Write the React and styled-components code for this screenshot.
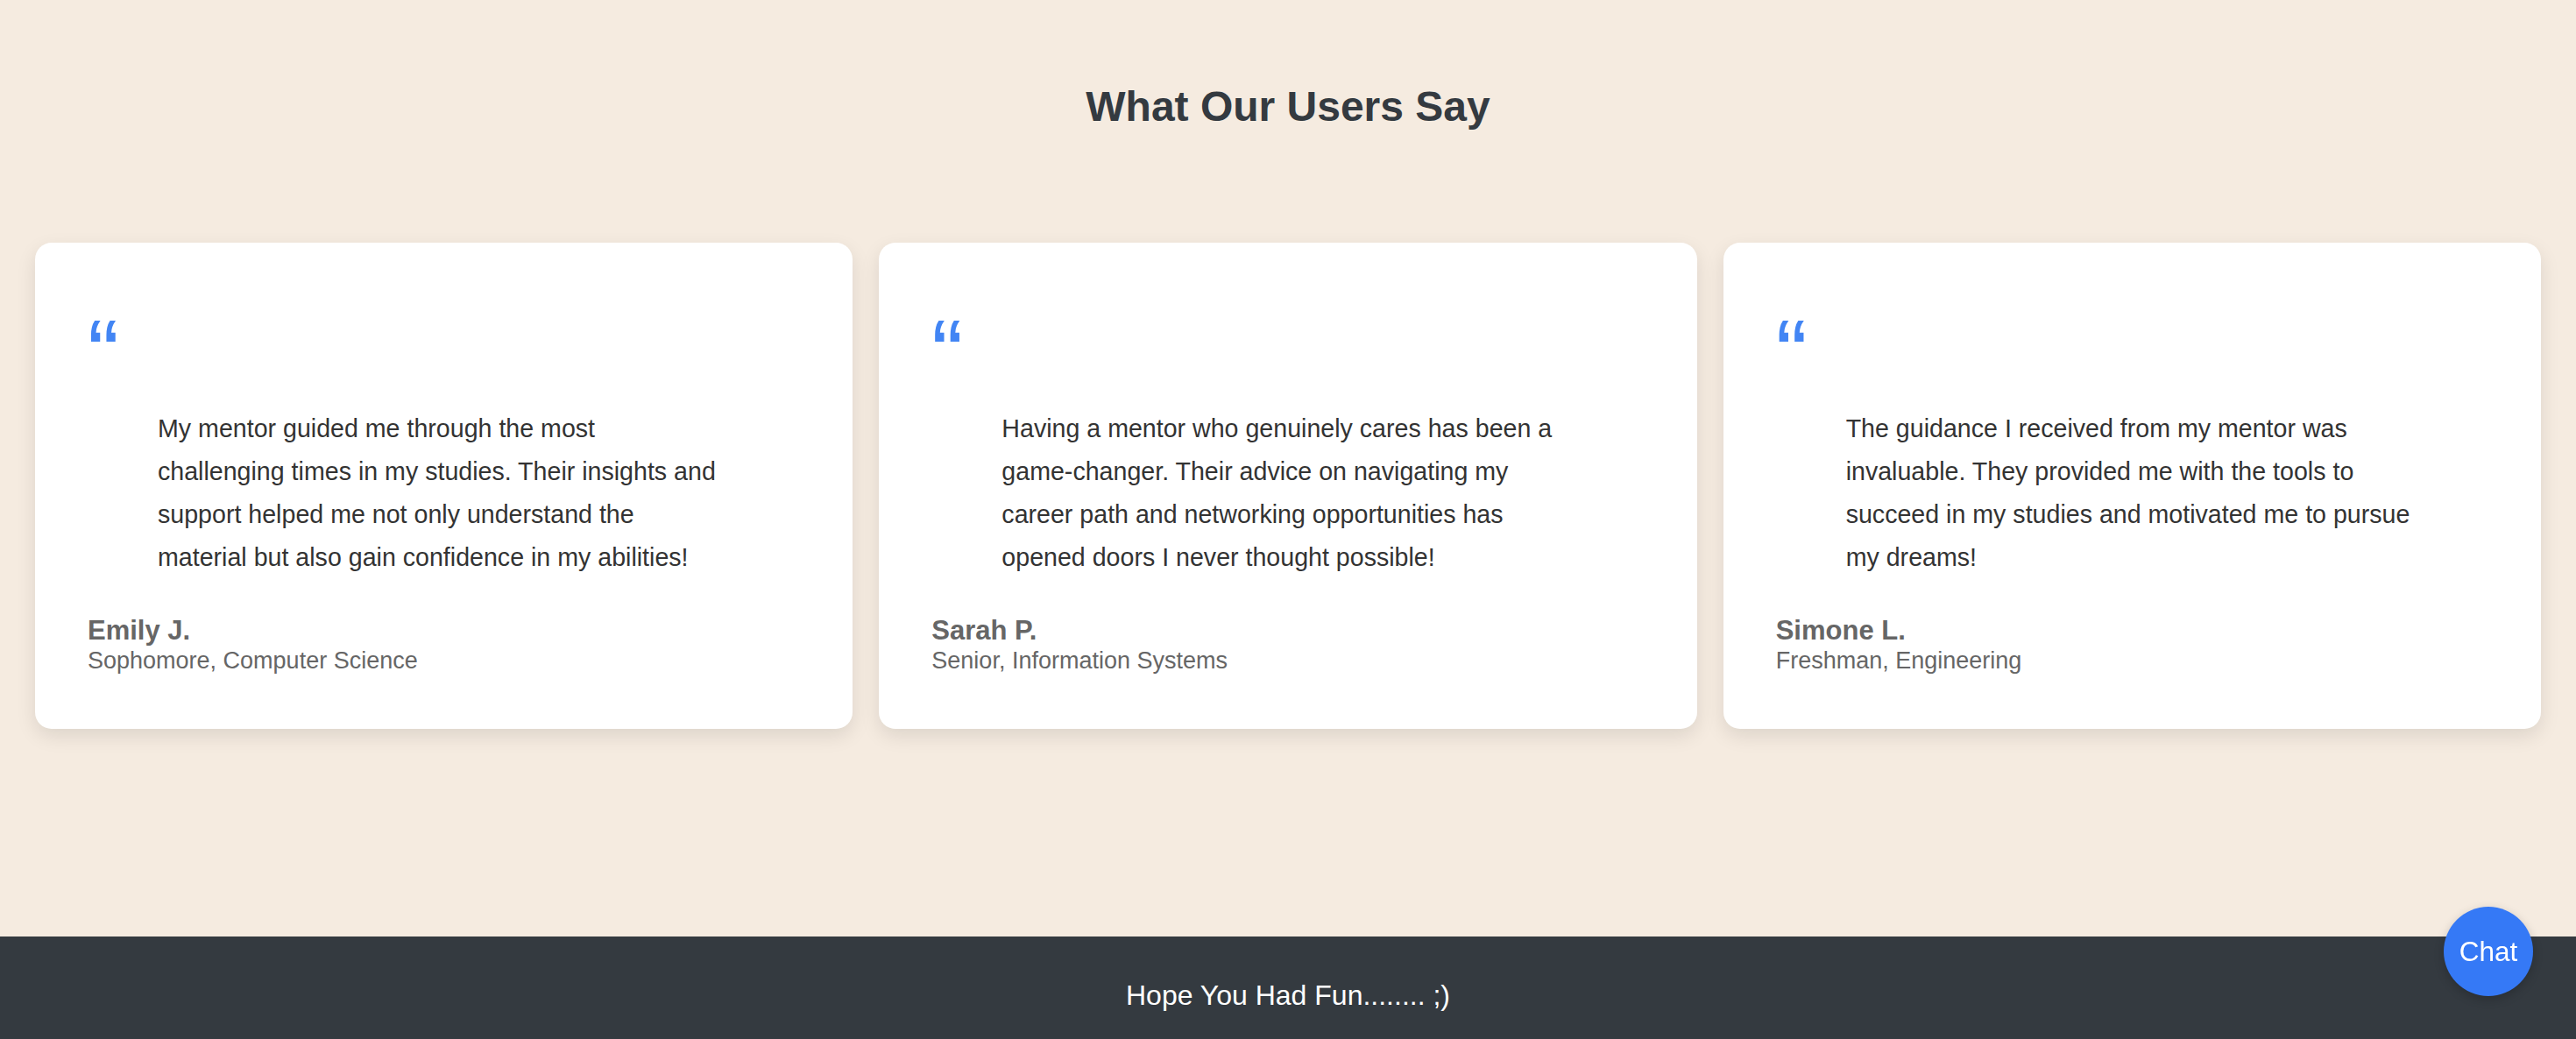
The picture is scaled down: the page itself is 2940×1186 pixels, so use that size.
import React from 'react';
import styled, { createGlobalStyle } from 'styled-components';

const GlobalStyle = createGlobalStyle`
	html,
	body {
		margin: 0;
		padding: 0;
		background: #f5ebe0;
		font-family: 'Liberation Sans', Arial, Helvetica, sans-serif;
	}
`;

const Page = styled.div`
	min-height: 100vh;
	display: flex;
	flex-direction: column;
`;

const Section = styled.main`
	flex: 1;
	padding: 94px 40px 0;
`;

const Title = styled.h2`
	margin: 0;
	text-align: center;
	font-size: 48px;
	font-weight: 700;
	color: #343a40;
`;

const Grid = styled.div`
	margin-top: 128px;
	display: grid;
	grid-template-columns: repeat(3, 1fr);
	gap: 30px;
`;

const Card = styled.div`
	background: #fff;
	border-radius: 19px;
	padding: 60px 60px 62px;
	box-shadow: 0 8px 22px rgba(0, 0, 0, 0.1);
	display: flex;
	flex-direction: column;
`;

const QuoteMark = styled.div`
	margin-top: 12px;
	font-size: 108px;
	line-height: 1;
	height: 108px;
	color: #4285f4;
`;

const Quote = styled.blockquote`
	margin: 8px 40px 0 80px;
	font-size: 28.6px;
	line-height: 49px;
	color: #333;
`;

const Name = styled.div`
	margin-top: 41px;
	font-size: 31px;
	font-weight: 700;
	color: #666;
`;

const Role = styled.div`
	margin-top: 1px;
	font-size: 27px;
	color: #666;
`;

const Footer = styled.footer`
	background: #343a40;
	color: #fff;
	text-align: center;
	font-size: 32px;
	padding: 49px 0 31px;
`;

const ChatButton = styled.button`
	position: fixed;
	right: 49px;
	bottom: 49px;
	width: 102px;
	height: 102px;
	border-radius: 50%;
	border: none;
	background: #3579f6;
	color: #fff;
	font-family: inherit;
	font-size: 31.5px;
	box-shadow: 0 4px 12px rgba(0, 0, 0, 0.2);
	cursor: pointer;
`;

const testimonials = [
	{
		lines: [
			'My mentor guided me through the most',
			'challenging times in my studies. Their insights and',
			'support helped me not only understand the',
			'material but also gain confidence in my abilities!',
		],
		name: 'Emily J.',
		role: 'Sophomore, Computer Science',
	},
	{
		lines: [
			'Having a mentor who genuinely cares has been a',
			'game-changer. Their advice on navigating my',
			'career path and networking opportunities has',
			'opened doors I never thought possible!',
		],
		name: 'Sarah P.',
		role: 'Senior, Information Systems',
	},
	{
		lines: [
			'The guidance I received from my mentor was',
			'invaluable. They provided me with the tools to',
			'succeed in my studies and motivated me to pursue',
			'my dreams!',
		],
		name: 'Simone L.',
		role: 'Freshman, Engineering',
	},
];

function Testimonial({ item }) {
	return (
		<Card>
			<QuoteMark>“</QuoteMark>
			<Quote>
				{item.lines.map((line, i) => (
					<React.Fragment key={i}>
						{line}
						{i < item.lines.length - 1 && <br />}
					</React.Fragment>
				))}
			</Quote>
			<Name>{item.name}</Name>
			<Role>{item.role}</Role>
		</Card>
	);
}

export default function App() {
	return (
		<Page>
			<GlobalStyle />
			<Section>
				<Title>What Our Users Say</Title>
				<Grid>
					{testimonials.map((t) => (
						<Testimonial item={t} key={t.name} />
					))}
				</Grid>
			</Section>
			<Footer>Hope You Had Fun........ ;)</Footer>
			<ChatButton>Chat</ChatButton>
		</Page>
	);
}
